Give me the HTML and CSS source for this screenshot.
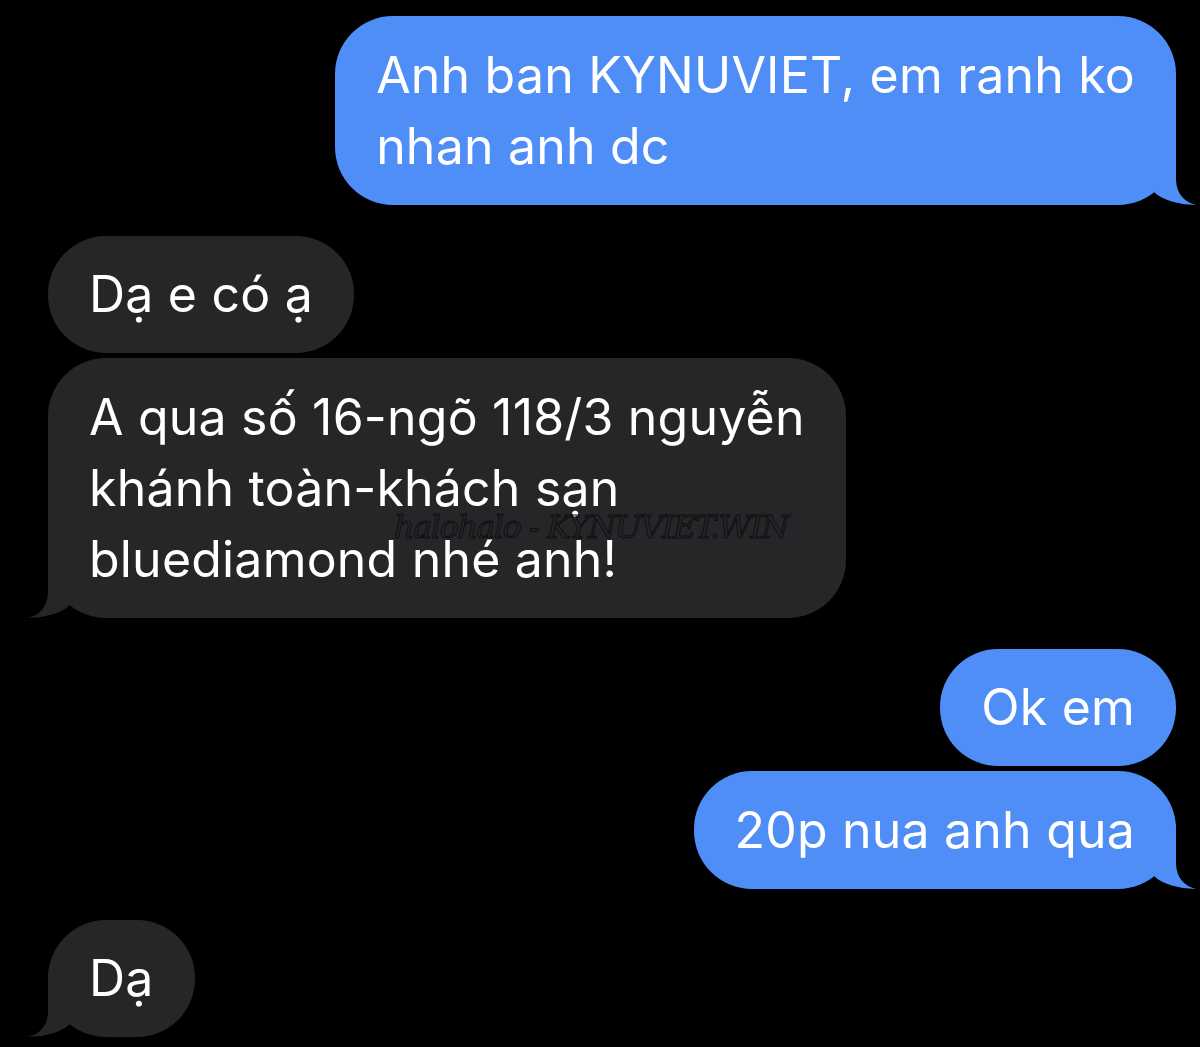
FILE: index.html
```html
<!DOCTYPE html>
<html lang="vi">

<head>
    <meta charset="UTF-8">
    <meta name="viewport" content="width=device-width, initial-scale=1.0">
    <title>Tin nhắn</title>
    <link rel="stylesheet" href="styles.css">
</head>

<body>
    <div class="chat">
        <div class="group me">
            <div class="bubble tail">
                Anh ban KYNUVIET, em ranh ko<br>nhan anh dc
                <svg class="tail-svg" viewBox="0 0 60 65" width="60" height="65"><path d="M0 20 L40 0 L40 40 Q41 60 60 65 Q32 64 19 53 Z"/></svg>
            </div>
        </div>

        <div class="group them">
            <div class="bubble">Dạ e có ạ</div>
            <div class="bubble tail">
                A qua số 16-ngõ 118/3 nguyễn<br>khánh toàn-khách sạn<br>bluediamond nhé anh!
                <svg class="tail-svg" viewBox="0 0 60 65" width="60" height="65"><path d="M0 20 L40 0 L40 40 Q41 60 60 65 Q32 64 19 53 Z"/></svg>
            </div>
        </div>

        <div class="group me">
            <div class="bubble">Ok em</div>
            <div class="bubble tail">
                20p nua anh qua
                <svg class="tail-svg" viewBox="0 0 60 65" width="60" height="65"><path d="M0 20 L40 0 L40 40 Q41 60 60 65 Q32 64 19 53 Z"/></svg>
            </div>
        </div>

        <div class="group them">
            <div class="bubble tail">
                Dạ
                <svg class="tail-svg" viewBox="0 0 60 65" width="60" height="65"><path d="M0 20 L40 0 L40 40 Q41 60 60 65 Q32 64 19 53 Z"/></svg>
            </div>
        </div>
    </div>

    <div class="watermark">halohalo - KYNUVIET.WIN</div>
</body>

</html>
```

FILE: styles.css
```css
* {
    margin: 0;
    padding: 0;
    box-sizing: border-box;
}

body {
    background: #000;
    font-family: Inter, 'Noto Sans', sans-serif;
    color: #fff;
    min-height: 100vh;
}

.chat {
    display: flex;
    flex-direction: column;
    gap: 31px;
    padding: 16px 24px 0 48px;
}

.group {
    display: flex;
    flex-direction: column;
    gap: 5px;
}

.group.me {
    align-items: flex-end;
}

.group.them {
    align-items: flex-start;
}

.bubble {
    position: relative;
    max-width: 860px;
    padding: 23.5px 41px 23px;
    border-radius: 58px;
    font-size: 50px;
    line-height: 71px;
    letter-spacing: 0.2px;
}

.me .bubble {
    background: #508ef7;
}

.them .bubble {
    background: #262629;
}

.tail-svg {
    position: absolute;
    bottom: 0;
    display: block;
}

.me .tail-svg {
    right: -20px;
    fill: #508ef7;
}

.them .tail-svg {
    left: -20px;
    fill: #262629;
    transform: scaleX(-1);
}

.watermark {
    position: absolute;
    left: 394px;
    top: 508px;
    font-family: 'DejaVu Serif', serif;
    font-style: italic;
    font-size: 32px;
    color: transparent;
    -webkit-text-stroke: 1px #0e0e10;
    letter-spacing: -1.5px;
}
```
